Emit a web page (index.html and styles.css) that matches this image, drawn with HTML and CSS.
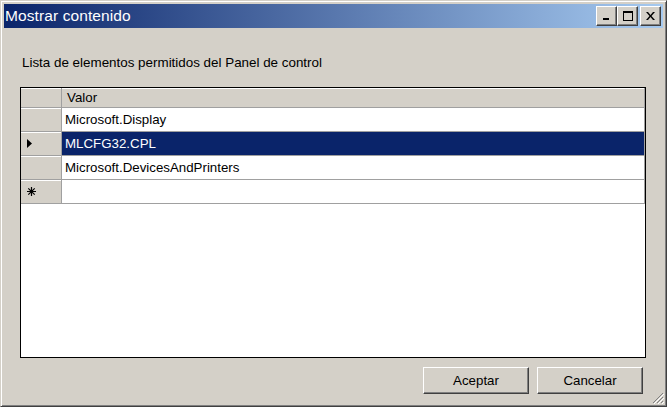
FILE: index.html
```html
<!DOCTYPE html>
<html>
<head>
<meta charset="utf-8">
<link rel="stylesheet" href="styles.css">
</head>
<body>
<div class="window">
  <div class="titlebar">
    <span class="title">Mostrar contenido</span>
    <div class="caption-buttons">
      <div class="cbtn"><svg width="8" height="7" viewBox="0 0 8 7"><rect x="0" y="5" width="6" height="2" fill="#000"/></svg></div>
      <div class="cbtn"><svg width="10" height="10" viewBox="0 0 10 10"><rect x="0.5" y="0.5" width="9" height="9" fill="none" stroke="#000"/><rect x="0" y="0" width="10" height="2" fill="#000"/></svg></div>
      <div class="cbtn close"><svg width="9" height="8" viewBox="0 0 9 8"><path d="M0 0h2l2.5 3 2.5-3h2l-3.5 4 3.5 4h-2l-2.5-3-2.5 3h-2l3.5-4z" fill="#000"/></svg></div>
    </div>
  </div>
  <div class="content">
    <div class="label">Lista de elementos permitidos del Panel de control</div>
    <div class="grid">
      <div class="row head">
        <div class="rh"></div>
        <div class="cell">Valor</div>
      </div>
      <div class="row">
        <div class="rh"></div>
        <div class="cell">Microsoft.Display</div>
      </div>
      <div class="row selected">
        <div class="rh"><svg width="5" height="9" viewBox="0 0 5 9"><path d="M0 0l5 4.5L0 9z" fill="#000"/></svg></div>
        <div class="cell">MLCFG32.CPL</div>
      </div>
      <div class="row">
        <div class="rh"></div>
        <div class="cell">Microsoft.DevicesAndPrinters</div>
      </div>
      <div class="row">
        <div class="rh"><svg width="9" height="9" viewBox="0 0 9 9"><path d="M4.5 0v9M0 4.5h9M1.3 1.3l6.4 6.4M7.7 1.3l-6.4 6.4" stroke="#000" stroke-width="1.2"/></svg></div>
        <div class="cell"></div>
      </div>
    </div>
    <div class="actions">
      <button class="btn">Aceptar</button>
      <button class="btn">Cancelar</button>
    </div>
  </div>
  <svg class="grip" width="12" height="12" viewBox="0 0 12 12">
    <path d="M11 1L1 11M11 5L5 11M11 9L9 11" stroke="#808080" stroke-width="1"/>
    <path d="M12 2L2 12M12 6L6 12M12 10L10 12" stroke="#fff" stroke-width="1"/>
  </svg>
</div>
</body>
</html>
```

FILE: styles.css
```css
* { box-sizing: border-box; }
html, body {
  margin: 0;
  padding: 0;
  width: 667px;
  height: 407px;
  overflow: hidden;
  background: #d4d0c8;
}
.window {
  position: relative;
  width: 667px;
  height: 407px;
  background: #d4d0c8;
  border: 1px solid;
  border-color: #d4d0c8 #404040 #404040 #d4d0c8;
  box-shadow: inset 1px 1px 0 #fff, inset -1px -1px 0 #808080;
  padding: 3px;
  display: flex;
  flex-direction: column;
  font-family: "Liberation Sans", Arial, sans-serif;
}
.titlebar {
  height: 24px;
  background: linear-gradient(to right, #0a246a, #a6caf0);
  display: flex;
  align-items: center;
  justify-content: space-between;
  padding: 0 2px 0 1px;
  flex: none;
}
.title {
  color: #fff;
  font-size: 15.5px;
  letter-spacing: 0.1px;
}
.caption-buttons {
  display: flex;
  gap: 0;
}
.cbtn {
  width: 21px;
  height: 20px;
  background: #d4d0c8;
  border: 1px solid;
  border-color: #fff #404040 #404040 #fff;
  box-shadow: inset -1px -1px 0 #808080;
  display: flex;
  align-items: center;
  justify-content: center;
}
.cbtn.close { margin-left: 2px; }
.content {
  flex: 1;
  display: flex;
  flex-direction: column;
  padding: 27px 17px 0 16px;
}
.label {
  font-size: 13.4px;
  color: #000;
  padding-left: 2px;
  height: 16px;
  line-height: 16px;
}
.grid {
  margin-top: 16px;
  height: 271px;
  background: #fff;
  border: 1px solid #000;
  display: flex;
  flex-direction: column;
}
.row {
  display: flex;
  height: 24px;
}
.row.head { height: 20px; }
.rh {
  width: 41px;
  flex: none;
  background: #d4d0c8;
  border-right: 1px solid #a0a0a0;
  border-bottom: 1px solid #a0a0a0;
  box-shadow: inset 0 1px 0 #fff;
  display: flex;
  align-items: center;
  padding-left: 6px;
}
.cell {
  flex: 1;
  border-bottom: 1px solid #a0a0a0;
  border-right: 1px solid #a0a0a0;
  font-size: 13.3px;
  color: #000;
  display: flex;
  align-items: center;
  padding-left: 3px;
}
.head .cell {
  background: #d4d0c8;
  box-shadow: inset 0 1px 0 #fff;
  padding-left: 5px;
}
.selected .cell {
  background: #0a246a;
  color: #fff;
}
.actions {
  display: flex;
  justify-content: flex-end;
  gap: 8px;
  margin-top: 9px;
  padding-right: 3px;
}
.btn {
  width: 106px;
  height: 27px;
  background: #d4d0c8;
  border: 1px solid;
  border-color: #fff #404040 #404040 #fff;
  box-shadow: inset -1px -1px 0 #808080;
  font-family: "Liberation Sans", Arial, sans-serif;
  font-size: 13.3px;
  color: #000;
  padding: 0;
}
.grip {
  position: absolute;
  right: 2px;
  bottom: 2px;
}
```
